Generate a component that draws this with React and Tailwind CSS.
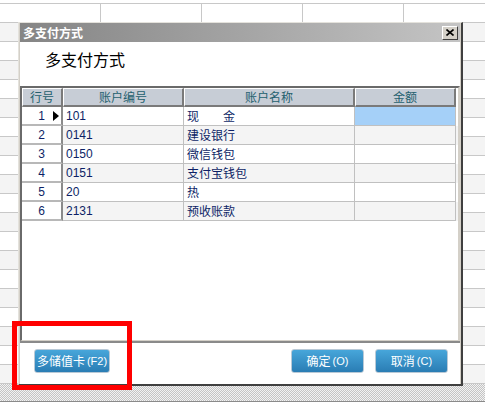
import React from "react"

const rows = [
  { no: "1", code: "101", name: "现　　金", current: true },
  { no: "2", code: "0141", name: "建设银行" },
  { no: "3", code: "0150", name: "微信钱包" },
  { no: "4", code: "0151", name: "支付宝钱包" },
  { no: "5", code: "20", name: "热" },
  { no: "6", code: "2131", name: "预收账款" },
]

const sheetRows = Array.from({ length: 19 }, (_, i) => i)

const Btn = ({ label, hot, className = "" }) => (
  <button
    className={
      "h-[24px] flex items-center justify-center gap-[2px] rounded-[3px] border border-[#b9c9d6] bg-gradient-to-b from-[#47a6da] to-[#2a7db4] text-white text-[12px] leading-none " +
      className
    }
  >
    <span>{label}</span>
    <span className="text-[11px] font-['Liberation_Sans',sans-serif]">({hot})</span>
  </button>
)

export default function App() {
  return (
    <div className="relative w-[485px] h-[412px] overflow-hidden bg-white font-['Noto_Sans_CJK_SC','Liberation_Sans',sans-serif]">
      {/* spreadsheet behind the dialog */}
      <div className="h-[4px] border-b border-[#c8c8c8]" />
      <div className="h-[19px] flex border-b border-[#c8c8c8]">
        <div className="w-[101px] border-r border-[#c8c8c8]" />
        <div className="w-[101px] border-r border-[#c8c8c8]" />
        <div className="w-[101px] border-r border-[#c8c8c8]" />
        <div className="w-[101px] border-r border-[#c8c8c8]" />
        <div className="flex-1" />
      </div>
      {sheetRows.map((i) => (
        <div
          key={i}
          className={"h-[19px] border-b border-[#c8c8c8] " + (i % 2 === 0 ? "bg-[#f4f4f4]" : "bg-white")}
        />
      ))}
      <div className="h-[17px] bg-[repeating-conic-gradient(#c4c4c4_0%_25%,#f2f2f2_0%_50%)] bg-[length:2px_2px]" />
      <div className="h-[1px] bg-[#8a8a8a]" />

      {/* dialog */}
      <div className="absolute left-[18px] top-[22px] w-[445px] h-[364px] flex flex-col bg-[#d4d0c8] border-t border-l border-[#e4e2dc] border-r-2 border-b-2 border-r-[#404040] border-b-[#404040] pl-[1px] pt-[0px] pr-[1px]">
        <div className="h-[19px] flex items-center justify-between bg-gradient-to-r from-[#858585] to-[#c4c4c4] pl-[3px] pr-[2px]">
          <span className="text-white text-[12px] font-bold leading-none">多支付方式</span>
          <div className="w-[16px] h-[14px] flex items-center justify-center bg-[#d4d0c8] border border-t-white border-l-white border-r-[#404040] border-b-[#404040]">
            <svg width="8" height="7" viewBox="0 0 8 7">
              <path d="M0.5 0.5 L7.5 6.5 M7.5 0.5 L0.5 6.5" stroke="#000" strokeWidth="1.6" />
            </svg>
          </div>
        </div>

        <div className="flex-1 flex flex-col bg-white">
          <div className="h-[44px] pl-[25px] pt-[6px] text-[16px] text-black leading-[22px]">多支付方式</div>

          {/* grid */}
          <div className="h-[255px] border-t-2 border-l-2 border-[#6a6a6a] border-r-2 border-r-[#d4d0c8] border-b border-b-[#d4d0c8] bg-white text-[12px]">
            <div className="flex h-[19px] text-[#24606e]">
              <div className="w-[41px] flex items-center justify-center bg-[#c7cdd6] border-t border-l border-white border-r-2 border-b-2 border-r-[#7a7a7a] border-b-[#7a7a7a]">行号</div>
              <div className="w-[121px] flex items-center justify-center bg-[#c7cdd6] border-t border-l border-white border-r-2 border-b-2 border-r-[#7a7a7a] border-b-[#7a7a7a]">账户编号</div>
              <div className="w-[171px] flex items-center justify-center bg-[#c7cdd6] border-t border-l border-white border-r-2 border-b-2 border-r-[#7a7a7a] border-b-[#7a7a7a]">账户名称</div>
              <div className="w-[101px] flex items-center justify-center bg-[#c7cdd6] border-t border-l border-white border-r-2 border-b-2 border-r-[#7a7a7a] border-b-[#7a7a7a]">金额</div>
            </div>
            {rows.map((r, i) => (
              <div key={r.no} className={"flex h-[19px] text-[#0d1f66] " + (i % 2 === 0 ? "bg-white" : "bg-[#f4f4f4]")}>
                <div className="relative w-[41px] flex items-center justify-center bg-white border-r-2 border-b-2 border-r-[#8a8a8a] border-b-[#b8b8b8] font-['Liberation_Sans',sans-serif]">
                  {r.no}
                  {r.current && (
                    <span className="absolute right-[2px] top-[4px] w-0 h-0 border-l-[6px] border-l-black border-y-[5px] border-y-transparent" />
                  )}
                </div>
                <div className="w-[121px] flex items-center pl-[3px] border-r border-b border-[#c0c0c0] font-['Liberation_Sans',sans-serif]">{r.code}</div>
                <div className="w-[171px] flex items-center pl-[3px] border-r border-b border-[#c0c0c0]">{r.name}</div>
                <div className={"w-[101px] border-r border-b border-[#c0c0c0] " + (r.current ? "bg-[#a5d0f8]" : "")} />
              </div>
            ))}
          </div>

          {/* bottom bar */}
          <div className="flex-1 flex justify-between items-start border-t-2 border-[#8a8a8a] pt-[6px] pl-[14px] pr-[12px]">
            <Btn label="多储值卡" hot="F2" className="w-[76px]" />
            <div className="flex gap-[11px]">
              <Btn label="确定" hot="O" className="w-[73px]" />
              <Btn label="取消" hot="C" className="w-[73px]" />
            </div>
          </div>
        </div>
      </div>

      {/* red highlight */}
      <div className="absolute left-[12px] top-[321px] w-[120px] h-[69px] border-[5px] border-[#ff0000]" />
    </div>
  )
}
